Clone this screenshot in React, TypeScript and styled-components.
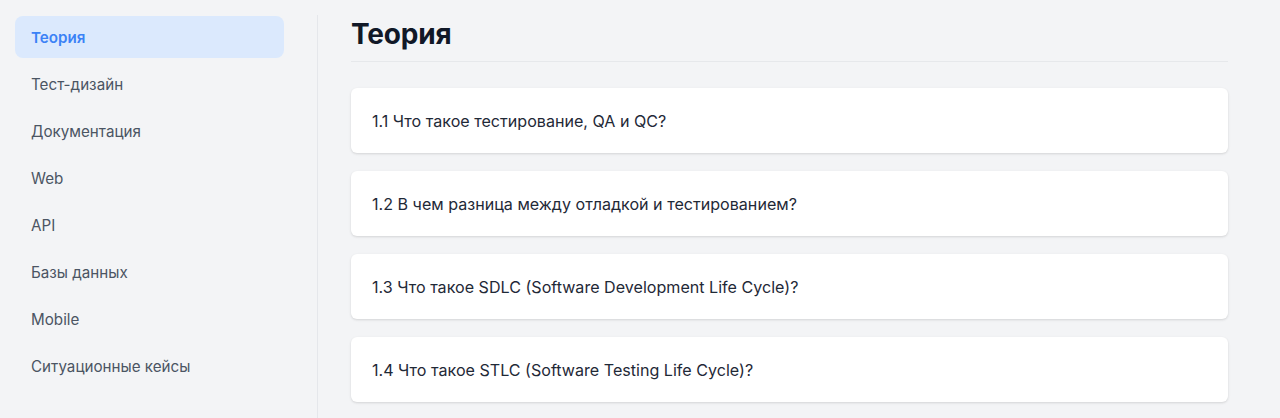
import React from "react";
import styled, { createGlobalStyle } from "styled-components";

const Global = createGlobalStyle`
  html, body { margin: 0; padding: 0; background: #f3f4f6; }
  body { font-family: Inter, "Noto Sans", sans-serif; -webkit-font-smoothing: antialiased; }
`;

const Layout = styled.div`
  display: flex;
  align-items: flex-start;
  height: 418px;
  overflow: hidden;
  background: #f3f4f6;
`;

const Sidebar = styled.nav`
  width: 317px;
  box-sizing: border-box;
  padding: 16px 33px 0 15px;
  display: flex;
  flex-direction: column;
  gap: 5px;
`;

const NavItem = styled.div<{ $active?: boolean }>`
  height: 42px;
  display: flex;
  align-items: center;
  padding-left: 16px;
  border-radius: 8px;
  font-size: 15.2px;
  font-weight: ${(p) => (p.$active ? 600 : 400)};
  color: ${(p) => (p.$active ? "#3b82f6" : "#4b5563")};
  background: ${(p) => (p.$active ? "#dbe9fd" : "transparent")};
`;

const Main = styled.main`
  flex: 1;
  margin-top: 15px;
  border-left: 1px solid #e5e7eb;
  height: 403px;
  padding: 0 52px 0 33px;
  box-sizing: border-box;
`;

const Title = styled.h1`
  margin: 0;
  height: 47px;
  display: flex;
  align-items: center;
  padding-bottom: 8px;
  font-size: 28px;
  font-weight: 700;
  color: #111827;
  border-bottom: 1px solid #e6e8eb;
  box-sizing: border-box;
  letter-spacing: -0.2px;
`;

const List = styled.div`
  margin-top: 26px;
  display: flex;
  flex-direction: column;
  gap: 18px;
`;

const Card = styled.div`
  height: 65px;
  display: flex;
  align-items: center;
  padding-left: 21px;
  background: #ffffff;
  border-radius: 6px;
  box-shadow: 0 1px 3px rgba(0, 0, 0, 0.1), 0 1px 2px rgba(0, 0, 0, 0.04);
  font-size: 16.1px;
  color: #1f2937;
`;

const nav = [
  "Теория",
  "Тест-дизайн",
  "Документация",
  "Web",
  "API",
  "Базы данных",
  "Mobile",
  "Ситуационные кейсы",
];

const questions = [
  "1.1 Что такое тестирование, QA и QC?",
  "1.2 В чем разница между отладкой и тестированием?",
  "1.3 Что такое SDLC (Software Development Life Cycle)?",
  "1.4 Что такое STLC (Software Testing Life Cycle)?",
];

export default function App() {
  return (
    <>
      <Global />
      <Layout>
        <Sidebar>
          {nav.map((n, i) => (
            <NavItem key={n} $active={i === 0}>
              {n}
            </NavItem>
          ))}
        </Sidebar>
        <Main>
          <Title>Теория</Title>
          <List>
            {questions.map((q) => (
              <Card key={q}>{q}</Card>
            ))}
          </List>
        </Main>
      </Layout>
    </>
  );
}
